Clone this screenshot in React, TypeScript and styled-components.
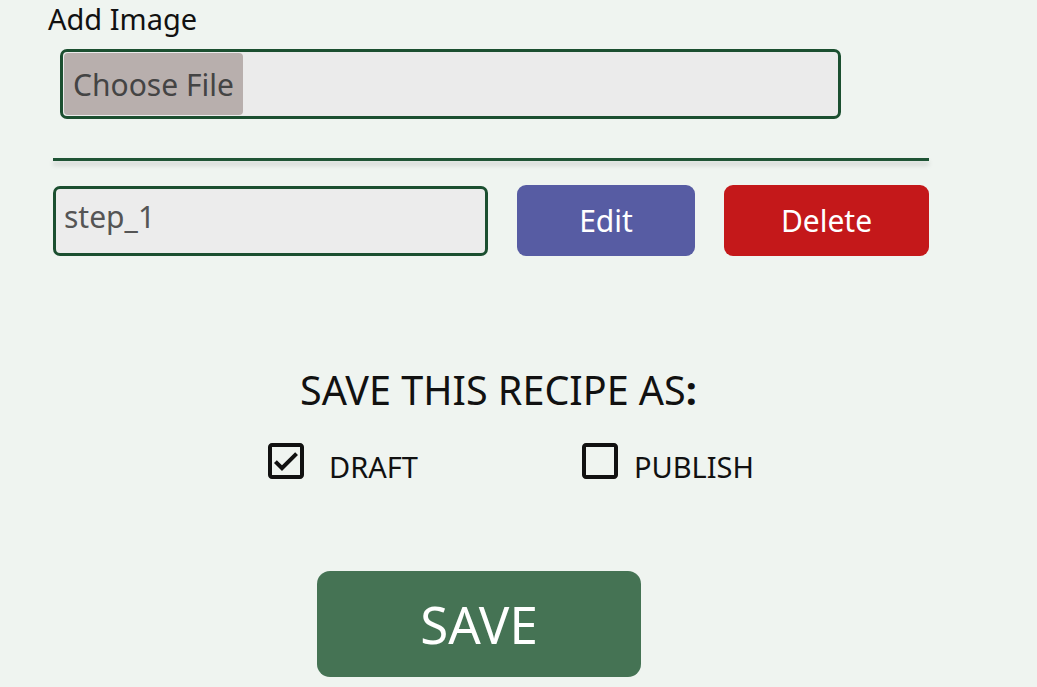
import React from "react";
import styled, { createGlobalStyle } from "styled-components";
import { MdOutlineCheckBox, MdCheckBoxOutlineBlank } from "react-icons/md";

const Global = createGlobalStyle`
  html, body { margin: 0; padding: 0; background: #eff4f0; }
  body { font-family: "Noto Sans", "Open Sans", sans-serif; color: #111; }
`;

const Page = styled.div`
  width: 1037px;
  height: 687px;
  overflow: hidden;
  background: #eff4f0;
  display: flex;
  flex-direction: column;
  padding-left: 48px;
  box-sizing: border-box;
`;

const Label = styled.div`
  font-size: 29px;
  line-height: 38px;
  height: 38px;
  color: #111;
`;

const FileBox = styled.div`
  margin: 11px 0 0 12px;
  width: 781px;
  height: 70px;
  box-sizing: border-box;
  border: 3px solid #1b4f30;
  border-radius: 7px;
  background: #ebebeb;
  padding: 1px;
  display: flex;
`;

const ChooseBtn = styled.div`
  width: 179px;
  height: 100%;
  background: #b8afad;
  border-radius: 4px;
  color: #444;
  font-size: 30px;
  display: flex;
  align-items: center;
  justify-content: center;
`;

const Divider = styled.div`
  margin: 39px 0 0 5px;
  width: 876px;
  height: 3px;
  background: #1f5435;
  box-shadow: 0 4px 5px rgba(0, 0, 0, 0.16);
`;

const Row = styled.div`
  margin: 24px 0 0 5px;
  display: flex;
  align-items: center;
  width: 876px;
`;

const StepInput = styled.div`
  width: 435px;
  height: 70px;
  box-sizing: border-box;
  border: 3px solid #1b4f30;
  border-radius: 7px;
  background: #ececec;
  color: #555;
  font-size: 30px;
  line-height: 41px;
  padding: 7px 0 0 8px;
`;

const ActionBtn = styled.div<{ $bg: string; $w: number; $ml: number }>`
  margin-left: ${(p) => p.$ml}px;
  width: ${(p) => p.$w}px;
  height: 71px;
  border-radius: 9px;
  background: ${(p) => p.$bg};
  color: #fff;
  font-size: 30px;
  display: flex;
  align-items: center;
  justify-content: center;
`;

const Heading = styled.div`
  margin: 108px 0 0 252px;
  font-size: 39.5px;
  line-height: 52px;
  color: #111;
  white-space: nowrap;
  b { font-weight: 700; }
`;

const Options = styled.div`
  margin: 21px 0 0 214px;
  display: flex;
  align-items: center;
`;

const Option = styled.div<{ $ml: number }>`
  margin-left: ${(p) => p.$ml}px;
  display: flex;
  align-items: center;
  color: #111;
  font-size: 29px;
  svg { display: block; }
`;

const OptText = styled.span<{ $gap: number }>`
  margin-left: ${(p) => p.$gap}px;
  position: relative;
  top: 5px;
`;

const SaveBtn = styled.div`
  margin: 86px 0 0 269px;
  width: 324px;
  height: 106px;
  border-radius: 13px;
  background: #457354;
  color: #fff;
  font-size: 51px;
  display: flex;
  align-items: center;
  justify-content: center;
`;

export default function App() {
  return (
    <>
      <Global />
      <Page>
        <Label>Add Image</Label>
        <FileBox>
          <ChooseBtn>Choose File</ChooseBtn>
        </FileBox>
        <Divider />
        <Row>
          <StepInput>step_1</StepInput>
          <ActionBtn $bg="#575ca3" $w={178} $ml={29}>Edit</ActionBtn>
          <ActionBtn $bg="#c4181a" $w={205} $ml={29}>Delete</ActionBtn>
        </Row>
        <Heading>SAVE THIS RECIPE AS<b>:</b></Heading>
        <Options>
          <Option $ml={0}>
            <MdOutlineCheckBox size={48} />
            <OptText $gap={19}>DRAFT</OptText>
          </Option>
          <Option $ml={158}>
            <MdCheckBoxOutlineBlank size={48} />
            <OptText $gap={10}>PUBLISH</OptText>
          </Option>
        </Options>
        <SaveBtn>SAVE</SaveBtn>
      </Page>
    </>
  );
}
